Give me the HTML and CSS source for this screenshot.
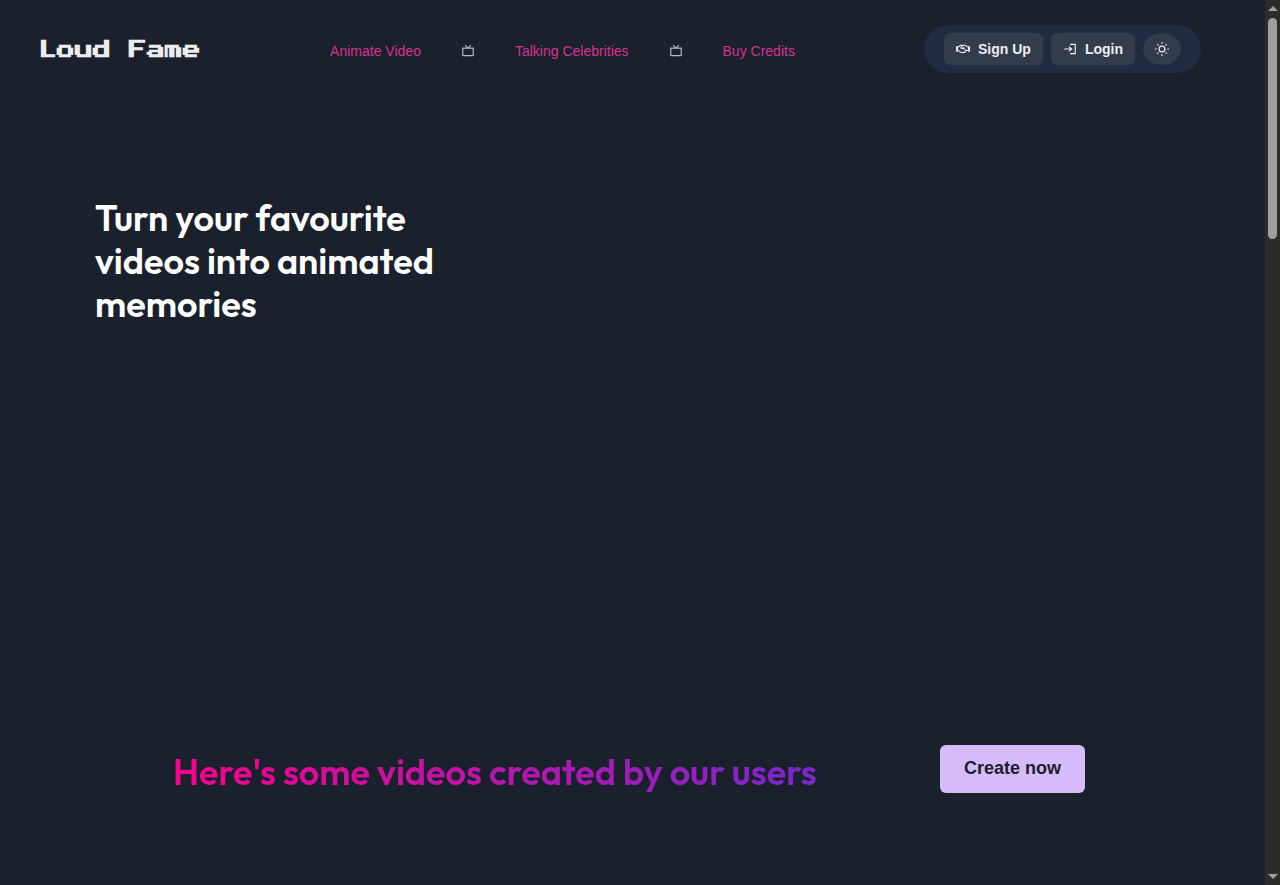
FILE: index.html
```html
<!DOCTYPE html>
<html lang="en">
  <head>
    <meta charset="UTF-8" />
    <meta name="viewport" content="width=device-width, initial-scale=1.0" />
    <title>Loud Fame</title>
    <link rel="stylesheet" href="styles.css">
  </head>
  <body>
    <div class="page">
      <header class="header">
        <a class="logo" href="#">Loud Fame</a>
        <nav class="nav">
          <a href="#">Animate Video</a>
          <svg class="icon" viewBox="0 0 24 24" fill="none" stroke="currentColor" stroke-width="2">
            <rect x="3" y="7" width="18" height="13" rx="1" />
            <path d="M7 2l5 5 5-5" />
          </svg>
          <a href="#">Talking Celebrities</a>
          <svg class="icon" viewBox="0 0 24 24" fill="none" stroke="currentColor" stroke-width="2">
            <rect x="3" y="7" width="18" height="13" rx="1" />
            <path d="M7 2l5 5 5-5" />
          </svg>
          <a href="#">Buy Credits</a>
        </nav>
        <div class="actions">
          <button class="btn" type="button">
            <svg class="icon" viewBox="0 0 640 512" fill="currentColor">
              <path d="M519.2 127.9l-47.6-47.6A56.252 56.252 0 0 0 432 64H205.2c-14.8 0-29.1 5.9-39.6 16.3L118 127.9H0v255.7h64c17.6 0 31.8-14.2 31.9-31.7h9.1l84.6 76.4c30.9 25.1 73.8 25.7 105.6 3.8 12.5 10.8 26 15.9 41.1 15.9 18.2 0 35.3-7.4 48.8-24 22.1 8.7 48.2 2.6 64-16.8l26.2-32.3c5.6-6.9 9.1-14.8 10.9-23h57.9c.1 17.5 14.4 31.7 31.9 31.7h64V127.9H519.2zM48 351.6c-8.8 0-16-7.2-16-16s7.2-16 16-16 16 7.2 16 16c0 8.9-7.2 16-16 16zm390-6.9l-26.1 32.2c-2.8 3.4-7.8 4-11.3 1.2l-23.9-19.4-30 36.5c-6 7.3-15 4.8-18 2.4l-36.8-31.5-15.6 19.2c-13.9 17.1-39.2 19.7-55.3 6.6l-97.3-88H96V175.8h41.9l61.7-61.6c2-.8 3.7-1.5 5.7-2.3H262l-38.7 35.5c-29.4 26.9-31.1 72.3-4.4 101.3 14.8 16.2 61.2 41.2 101.5 4.4l8.2-7.5 108.2 87.8c3.4 2.8 3.9 7.9 1.2 11.3zm106-40.8h-69.2c-2.3-2.8-4.9-5.4-7.7-7.7l-102.7-83.4 12.5-11.4c6.5-6 7-16.1 1-22.6L367 167.1c-6-6.5-16.1-6.9-22.6-1l-55.2 50.6c-9.5 8.7-25.7 9.4-34.6 0-9.3-9.9-8.5-25.1 1.2-33.9l65.6-60.1c7.4-6.8 17-10.5 27-10.5l83.7-.2c2.1 0 4.1.8 5.5 2.3l61.7 61.6H544v128zm48 47.7c-8.8 0-16-7.2-16-16s7.2-16 16-16 16 7.2 16 16c0 8.9-7.2 16-16 16z" />
            </svg>
            Sign Up
          </button>
          <button class="btn" type="button">
            <svg class="icon" viewBox="0 0 24 24" fill="none" stroke="currentColor" stroke-width="2">
              <path d="M12 4h9v16h-9" />
              <path d="M2 12h13M10 8l5 4-5 4" />
            </svg>
            Login
          </button>
          <button class="btn btn-round" type="button" aria-label="Toggle theme">
            <svg class="icon" viewBox="0 0 24 24" fill="none" stroke="currentColor" stroke-width="2">
              <circle cx="12" cy="12" r="5" />
              <path d="M12 0v3M12 21v3M0 12h3M21 12h3M4 4l2 2M18 18l2 2M4 20l2-2M18 6l2-2" />
            </svg>
          </button>
        </div>
      </header>
      <main>
        <section class="hero">
          <h1>Turn your favourite videos into animated memories</h1>
        </section>
        <section class="showcase">
          <h2>Here's some videos created by our users</h2>
          <button class="create" type="button">Create now</button>
        </section>
      </main>
    </div>
    <div class="scrollbar" aria-hidden="true">
      <div class="arrow-up"></div>
      <div class="track"><div class="thumb"></div></div>
      <div class="arrow-down"></div>
    </div>
  </body>
</html>
```
FILE: styles.css
```css
* {
  box-sizing: border-box;
}
body {
  display: flex;
  min-height: 100vh;
  margin: 0;
  font-family: "Liberation Sans", Arial, sans-serif;
  background: #1a202c;
  color: white;
}
.page {
  flex: 1;
  min-width: 0;
}
.header {
  display: flex;
  align-items: center;
  justify-content: space-between;
  padding: 25px 64px 25px 39px;
}
.logo {
  padding-top: 2px;
  font-family: "Press Start 2P", "DejaVu Sans Mono", monospace;
  font-size: 18px;
  font-weight: bold;
  line-height: 46px;
  color: #edecee;
  text-decoration: none;
}
.nav {
  display: flex;
  align-items: center;
  gap: 40px;
  padding-top: 4px;
  font-size: 14px;
  color: #b4bac6;
}
.nav a {
  color: #d53390;
  text-decoration: none;
}
.icon {
  width: 14px;
  height: 14px;
  flex-shrink: 0;
}
.actions {
  display: flex;
  gap: 8px;
  padding: 8px 20px;
  border-radius: 24px;
  background: #212b42;
}
.btn {
  display: flex;
  align-items: center;
  gap: 8px;
  height: 32px;
  padding: 0 12px;
  border: none;
  border-radius: 6px;
  background: #323c4d;
  color: #ededee;
  font-family: inherit;
  font-size: 14px;
  font-weight: bold;
  cursor: pointer;
}
.btn-round {
  border-radius: 50%;
}
h1,
h2 {
  margin: 0;
  font-family: Outfit, Lato, sans-serif;
  font-size: 36px;
  font-weight: 600;
  line-height: 43px;
}
.hero {
  min-height: 647px;
  padding: 98px 95px;
}
.hero h1 {
  max-width: 400px;
}
.showcase {
  display: flex;
  align-items: center;
  justify-content: space-between;
  padding: 0 180px 92px 173px;
}
.showcase h2 {
  padding-top: 4px;
  background: linear-gradient(to right, #f5038a, #7928ca);
  -webkit-background-clip: text;
  background-clip: text;
  color: transparent;
}
.create {
  height: 48px;
  padding: 0 24px 2px;
  border: none;
  border-radius: 6px;
  background: #d6bcfa;
  color: #1a202c;
  font-family: inherit;
  font-size: 18px;
  font-weight: bold;
  cursor: pointer;
}
.scrollbar {
  display: flex;
  flex-direction: column;
  align-items: center;
  width: 15px;
  padding: 6px 0;
  background: #2c2c2c;
}
.arrow-up,
.arrow-down {
  border: 5px solid transparent;
}
.arrow-up {
  border-top: none;
  border-bottom-color: #9f9f9f;
}
.arrow-down {
  border-bottom: none;
  border-top-color: #9f9f9f;
}
.track {
  flex: 1;
  width: 9px;
  padding: 7px 0;
}
.thumb {
  height: 26%;
  border-radius: 5px;
  background: #9f9f9f;
}
```
